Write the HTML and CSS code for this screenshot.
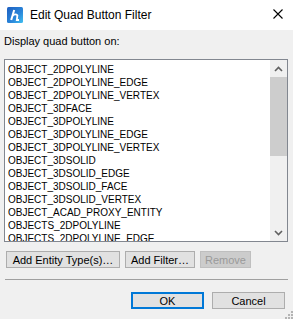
FILE: index.html
```html
<!DOCTYPE html>
<html>
<head>
<meta charset="utf-8">
<link rel="stylesheet" href="styles.css">
</head>
<body>
<div class="dialog">
  <div class="titlebar">
    <svg class="app-icon" width="16" height="16" viewBox="0 0 16 16">
      <defs>
        <linearGradient id="g" x1="0" y1="0" x2="1" y2="1">
          <stop offset="0" stop-color="#1f5fc0"/>
          <stop offset="0.6" stop-color="#2a86da"/>
          <stop offset="1" stop-color="#41c0f0"/>
        </linearGradient>
      </defs>
      <rect x="0" y="0" width="16" height="16" rx="1.5" fill="url(#g)"/>
      <path d="M7.2 3 L4.2 13" stroke="#fff" stroke-width="2" fill="none"/>
      <path d="M5.6 8.6 Q8.6 6.2 10.4 8.4 L9.8 13 L12 13" stroke="#fff" stroke-width="1.8" fill="none"/>
    </svg>
    <span class="title">Edit Quad Button Filter</span>
    <svg class="close" width="10" height="10" viewBox="0 0 10 10">
      <path d="M0.5 0.5 L9.5 9.5 M9.5 0.5 L0.5 9.5" stroke="#000" stroke-width="1.1" fill="none"/>
    </svg>
  </div>
  <div class="content">
    <div class="label">Display quad button on:</div>
    <div class="listbox">
      <div class="items">
        <div class="row">OBJECT_2DPOLYLINE</div>
        <div class="row">OBJECT_2DPOLYLINE_EDGE</div>
        <div class="row">OBJECT_2DPOLYLINE_VERTEX</div>
        <div class="row">OBJECT_3DFACE</div>
        <div class="row">OBJECT_3DPOLYLINE</div>
        <div class="row">OBJECT_3DPOLYLINE_EDGE</div>
        <div class="row">OBJECT_3DPOLYLINE_VERTEX</div>
        <div class="row">OBJECT_3DSOLID</div>
        <div class="row">OBJECT_3DSOLID_EDGE</div>
        <div class="row">OBJECT_3DSOLID_FACE</div>
        <div class="row">OBJECT_3DSOLID_VERTEX</div>
        <div class="row">OBJECT_ACAD_PROXY_ENTITY</div>
        <div class="row">OBJECTS_2DPOLYLINE</div>
        <div class="row">OBJECTS_2DPOLYLINE_EDGE</div>
      </div>
      <div class="scrollbar">
        <div class="sb-btn">
          <svg width="9" height="6" viewBox="0 0 9 6"><path d="M1 5 L4.5 1.5 L8 5" stroke="#606060" stroke-width="1.6" fill="none"/></svg>
        </div>
        <div class="thumb"></div>
        <div class="track"></div>
        <div class="sb-btn">
          <svg width="9" height="6" viewBox="0 0 9 6"><path d="M1 1 L4.5 4.5 L8 1" stroke="#606060" stroke-width="1.6" fill="none"/></svg>
        </div>
      </div>
    </div>
    <div class="actions">
      <button class="btn btn-entity">Add Entity Type(s)…</button>
      <button class="btn btn-filter">Add Filter…</button>
      <button class="btn btn-remove" disabled>Remove</button>
    </div>
    <div class="separator"></div>
    <div class="footer">
      <button class="btn btn-ok">OK</button>
      <button class="btn btn-cancel">Cancel</button>
    </div>
  </div>
  <svg class="grip" width="9" height="9" viewBox="0 0 9 9">
    <rect x="7" y="1" width="2" height="2" fill="#b4b4b4"/>
    <rect x="4" y="4" width="2" height="2" fill="#b4b4b4"/>
    <rect x="7" y="4" width="2" height="2" fill="#b4b4b4"/>
    <rect x="1" y="7" width="2" height="2" fill="#b4b4b4"/>
    <rect x="4" y="7" width="2" height="2" fill="#b4b4b4"/>
    <rect x="7" y="7" width="2" height="2" fill="#b4b4b4"/>
  </svg>
</div>
</body>
</html>
```
FILE: styles.css
```css
html, body {
  margin: 0;
  padding: 0;
  background: #f0f0f0;
  overflow: hidden;
}
.dialog {
  position: relative;
  width: 293px;
  height: 319px;
  background: #f0f0f0;
  font-family: "Liberation Sans", Arial, sans-serif;
  color: #000;
}
.titlebar {
  height: 30px;
  background: #fff;
  display: flex;
  align-items: center;
  padding-left: 7px;
  box-sizing: border-box;
}
.app-icon {
  margin-right: 7px;
  flex: none;
}
.title {
  font-size: 12px;
  flex: 1;
}
.close {
  flex: none;
  margin-right: 10px;
  align-self: flex-start;
  margin-top: 9px;
}
.content {
  padding: 5px 0 0 4px;
}
.label {
  font-size: 11px;
  line-height: 13px;
  height: 13px;
}
.listbox {
  margin-top: 11px;
  width: 284px;
  height: 183px;
  box-sizing: border-box;
  border: 1px solid #828790;
  background: #fff;
  display: flex;
}
.items {
  flex: 1;
  overflow: hidden;
  padding: 3px 0 0 3px;
}
.row {
  font-size: 10px;
  line-height: 13px;
  height: 13px;
  white-space: nowrap;
}
.scrollbar {
  width: 17px;
  flex: none;
  background: #f0f0f0;
  display: flex;
  flex-direction: column;
}
.sb-btn {
  height: 17px;
  display: flex;
  align-items: center;
  justify-content: center;
  flex: none;
}
.thumb {
  height: 79px;
  background: #cdcdcd;
  flex: none;
}
.track {
  flex: 1;
}
.actions {
  margin-top: 9px;
  padding-left: 2px;
  display: flex;
  gap: 5px;
}
.btn {
  font-family: "Liberation Sans", Arial, sans-serif;
  font-size: 11px;
  color: #000;
  background: #e1e1e1;
  border: 1px solid #adadad;
  box-sizing: border-box;
  height: 17px;
  padding: 0;
  margin: 0;
  line-height: 14px;
  text-align: center;
  white-space: nowrap;
}
.btn-entity { width: 114px; }
.btn-filter { width: 70px; }
.btn-remove {
  width: 51px;
  background: #cccccc;
  border-color: #bfbfbf;
  color: #9a9a9a;
}
.separator {
  margin-top: 11px;
  margin-left: 1px;
  width: 283px;
  height: 1px;
  background: #a0a0a0;
}
.footer {
  margin-top: 12px;
  padding-left: 127px;
  display: flex;
  gap: 8px;
}
.btn-ok {
  width: 73px;
  border: 2px solid #0078d7;
}
.btn-cancel {
  width: 73px;
}
.grip {
  position: absolute;
  right: 0;
  bottom: 0;
}
```
